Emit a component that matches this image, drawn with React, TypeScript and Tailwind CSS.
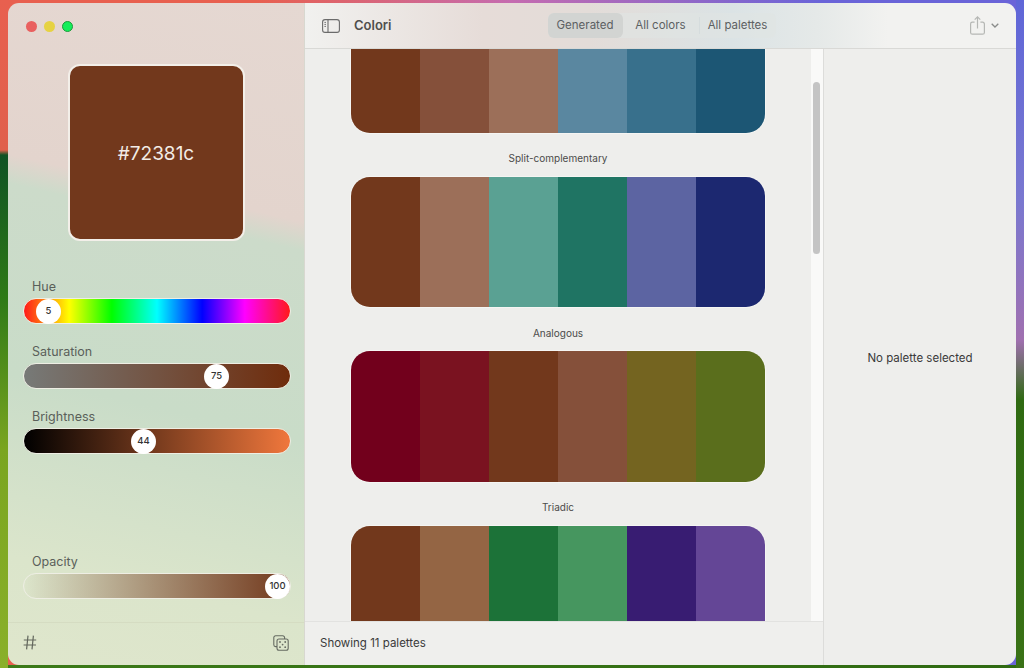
import React from "react";

const font = "font-['Inter','Liberation_Sans',sans-serif]";

const palettes = [
  { label: "", colors: ["#72381c", "#85503a", "#9c6f59", "#5a87a0", "#38708c", "#1c5674"] },
  { label: "Split-complementary", colors: ["#72381c", "#9c6f59", "#5aa193", "#1f7463", "#5c64a2", "#1c2870"] },
  { label: "Analogous", colors: ["#72001c", "#7a1220", "#72381c", "#85503a", "#746420", "#5a6e1c"] },
  { label: "Triadic", colors: ["#72381c", "#946544", "#1c7238", "#46965f", "#381c72", "#644696"] },
];

function Slider({
  label,
  value,
  track,
  thumb,
  mt,
}: {
  label: string;
  value: number;
  track: string;
  thumb: string;
  mt: string;
}) {
  return (
    <div className={`flex flex-col ${mt}`}>
      <span className="pl-[9px] text-[12.5px] leading-[16px] text-[#5a5f5a]">{label}</span>
      <div className={`mt-[3px] flex h-[26px] w-[268px] items-center rounded-full border border-[#eeeee4] ${track}`}>
        <div className={`flex h-[25px] w-[25px] items-center justify-center rounded-full bg-white text-[9.5px] font-medium text-[#333] ${thumb}`}>
          {value}
        </div>
      </div>
    </div>
  );
}

function SidebarIcon() {
  return (
    <svg width="18" height="14" viewBox="0 0 18 14" fill="none" stroke="#6b6b6b" strokeWidth="1.1">
      <rect x="0.6" y="0.6" width="16.8" height="12.8" rx="2.4" />
      <path d="M6 0.6v12.8" />
      <path d="M2.4 3.4h1.6M2.4 5.4h1.6M2.4 7.4h1.6" strokeWidth="0.9" />
    </svg>
  );
}

function ShareIcon() {
  return (
    <svg width="15" height="19" viewBox="0 0 15 19" fill="none" stroke="#b5b7b4" strokeWidth="1.2">
      <path d="M4.6 6.2H2.4a1.8 1.8 0 0 0-1.8 1.8v8.4a1.8 1.8 0 0 0 1.8 1.8h10.2a1.8 1.8 0 0 0 1.8-1.8V8a1.8 1.8 0 0 0-1.8-1.8h-2.2" />
      <path d="M7.5 12.4V1M4.7 3.6 7.5 0.9l2.8 2.7" />
    </svg>
  );
}

function DiceIcon() {
  return (
    <svg width="16" height="16" viewBox="0 0 16 16" fill="none" stroke="#666b62" strokeWidth="1.1">
      <path d="M4 11.6H2.6a1.8 1.8 0 0 1-1.8-1.8V2.6A1.8 1.8 0 0 1 2.6.8h7.2a1.8 1.8 0 0 1 1.8 1.8V4" />
      <rect x="4" y="4" width="11.2" height="11.2" rx="2" />
      <g fill="#666b62" stroke="none">
        <circle cx="7" cy="7" r="0.9" />
        <circle cx="12.2" cy="7" r="0.9" />
        <circle cx="9.6" cy="9.6" r="0.9" />
        <circle cx="7" cy="12.2" r="0.9" />
        <circle cx="12.2" cy="12.2" r="0.9" />
      </g>
    </svg>
  );
}

function HashIcon() {
  return (
    <svg width="14" height="15" viewBox="0 0 14 15" fill="none" stroke="#62665c" strokeWidth="1.2">
      <path d="M0.8 5h12.4M0.6 10h12.4M5 0.6 3.6 14.4M10.4 0.6 9 14.4" />
    </svg>
  );
}

export default function App() {
  return (
    <div className={`h-[668px] w-[1024px] overflow-hidden pt-[3px] pl-[8px] [background:linear-gradient(180deg,#e8604f_0,#e0604c_150px,#0f5224_155px,#2f7a16_300px,#7aa520_450px,#8ab02a_668px)_left_top/8px_100%_no-repeat,linear-gradient(180deg,#5f66d8_0,#7a78d0_200px,#a070b0_340px,#2f6a12_400px,#3a7216_668px)_right_top/8px_100%_no-repeat,linear-gradient(90deg,#3c7a18_0,#2f6a12_100%)_left_bottom/100%_3px_no-repeat,linear-gradient(90deg,#e8604f_0%,#e8604f_25%,#c56cb0_50%,#6a64d8_80%,#6a64d8_100%)] ${font}`}>
      <div className="flex h-[662px] w-[1008px] overflow-hidden rounded-[11px]">
        <aside className="flex w-[297px] shrink-0 flex-col border-r border-[#d8d8d0] bg-[linear-gradient(193deg,#e5d8d2_0%,#e3d4cd_30%,#ccdbca_34%,#c9dcc8_60%,#dbe5cb_85%,#dfe6cc_100%)]">
          <div className="flex h-[46px] items-center gap-[7px] pl-[18px]">
            <span className="h-[11px] w-[11px] rounded-full bg-[#e9605f]" />
            <span className="h-[11px] w-[11px] rounded-full bg-[#e6d242]" />
            <span className="h-[11px] w-[11px] rounded-full border border-[#1c9a3a] bg-[#14ee5a]" />
          </div>
          <div className="mt-[15px] flex justify-center">
            <div className="flex h-[177px] w-[177px] items-center justify-center rounded-[12px] border-2 border-[#f3efe9] bg-[#72381c] pt-[3px] text-[19px] text-[#f2ece6]">
              #72381c
            </div>
          </div>
          <div className="flex flex-1 flex-col pl-[15px]">
            <Slider
              label="Hue"
              value={5}
              mt="mt-[38px]"
              thumb="ml-[12px]"
              track="bg-[linear-gradient(90deg,#ff1a1a_0%,#ffff00_17%,#00ff00_33%,#00ffff_50%,#0000ff_67%,#ff00ff_83%,#ff1a1a_100%)]"
            />
            <Slider
              label="Saturation"
              value={75}
              mt="mt-[20px]"
              thumb="ml-[180px]"
              track="bg-[linear-gradient(90deg,#777a78_0%,#6f2c0c_100%)]"
            />
            <Slider
              label="Brightness"
              value={44}
              mt="mt-[20px]"
              thumb="ml-[107px]"
              track="bg-[linear-gradient(90deg,#000000_0%,#f0773c_100%)]"
            />
            <Slider
              label="Opacity"
              value={100}
              mt="mt-[100px]"
              thumb="ml-[241px]"
              track="bg-[linear-gradient(90deg,#72381c00_0%,#72381c_100%)]"
            />
          </div>
          <div className="flex h-[43px] items-center justify-between border-t border-[#d5dcc2] px-[15px] pb-[3px]">
            <HashIcon />
            <DiceIcon />
          </div>
        </aside>

        <div className="flex min-w-0 flex-1 flex-col">
          <header className="flex h-[46px] shrink-0 items-center border-b border-[#d9d9d6] bg-[linear-gradient(90deg,#f1f1ef_0%,#e6dcd8_25%,#e3dcd8_40%,#dbe3e5_60%,#e5e9e8_72%,#f2f2f0_82%,#f2f2f0_100%)]">
            <div className="ml-[17px]"><SidebarIcon /></div>
            <span className="ml-[14px] text-[13px] font-semibold text-[#4f4f4d]">Colori</span>
            <div className="ml-[156px] flex h-[25px] items-center rounded-[6px] bg-[#e0e4e3]/60 text-[11.5px] text-[#5c6062]">
              <span className="flex h-[25px] w-[75px] items-center justify-center rounded-[6px] bg-[#d2d4d2]">Generated</span>
              <span className="flex w-[76px] items-center justify-center">All colors</span>
              <span className="flex w-[77px] items-center justify-center border-l border-[#d5dcdd]">All palettes</span>
            </div>
            <div className="mr-[17px] ml-auto flex items-center gap-[6px]">
              <ShareIcon />
              <svg width="8" height="5" viewBox="0 0 8 5" fill="none" stroke="#8a8c8a" strokeWidth="1.3">
                <path d="M0.7 0.7 4 4l3.3-3.3" />
              </svg>
            </div>
          </header>

          <div className="flex min-h-0 flex-1">
            <div className="flex w-[518px] shrink-0 flex-col">
              <div className="flex min-h-0 flex-1">
                <main className="min-w-0 flex-1 overflow-hidden bg-[#eeeeec]">
                  <div className="mt-[-48px] flex flex-col items-center">
                    {palettes.map((p, i) => (
                      <div key={i} className="flex flex-col items-center">
                        {p.label && (
                          <div className="flex h-[42px] items-center justify-center pt-[8px] text-[10px] text-[#4b4b4a]">
                            {p.label}
                          </div>
                        )}
                        <div className="flex h-[132.5px] w-[416px] shrink-0 overflow-hidden rounded-[20px] border border-[#f5f5f3]">
                          {p.colors.map((c, j) => (
                            <div key={j} className="flex-1" style={{ backgroundColor: c }} />
                          ))}
                        </div>
                      </div>
                    ))}
                  </div>
                </main>
                <div className="w-[12px] shrink-0 bg-[#f9f9f8] px-[2px] pt-[33px]">
                  <div className="h-[172px] w-[7px] rounded-full bg-[#c4c4c4]" />
                </div>
              </div>
              <footer className="flex h-[44px] shrink-0 items-center border-t border-[#e2e2e0] bg-[#efefed] pt-[1px] pl-[15px] text-[11.5px] text-[#3a3a3a]">
                Showing 11 palettes
              </footer>
            </div>
            <section className="flex flex-1 items-center justify-center border-l border-[#dcdcda] bg-[#eeeeec] pt-[3px] text-[11.5px] text-[#3a3a3a]">
              No palette selected
            </section>
          </div>
        </div>
      </div>
    </div>
  );
}
